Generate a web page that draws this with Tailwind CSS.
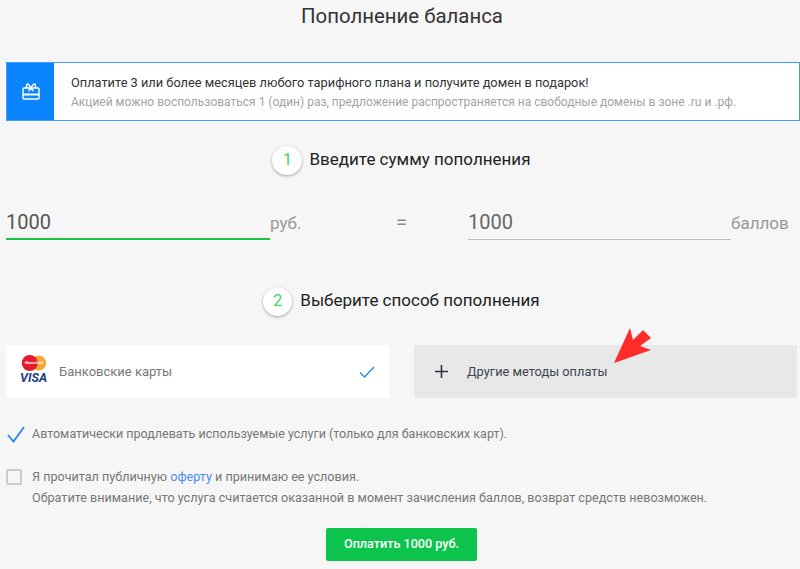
<!DOCTYPE html>
<html lang="ru">
<head>
<meta charset="utf-8">
<title>Пополнение баланса</title>
<script src="https://cdn.jsdelivr.net/npm/@tailwindcss/browser@4"></script>
</head>
<body class="bg-[#f6f6f6] font-['Roboto',sans-serif] overflow-hidden">
<main class="relative w-[800px] h-[569px] overflow-hidden">
    <!-- Title -->
    <h1 class="h-[32px] leading-[32px] text-center text-[20.4px] text-[#333] pl-[4px]">Пополнение баланса</h1>

    <!-- Promo banner -->
    <section class="flex h-[59px] mt-[30px] ml-[6px] bg-white border border-[#3d9dff]">
        <div class="flex items-center justify-center w-[47px] bg-[#0a84ff]">
            <svg width="18" height="17" viewBox="0 0 18 17" fill="none" stroke="#fff" stroke-width="1.4">
                <rect x="1" y="5" width="16" height="11" rx="1"/>
                <path d="M1 11.5h16" stroke-width="2"/>
                <path d="M9 5C7.5 2.5 6.5 1 5.5 1S4 3 5 5M9 5c1.5-2.5 2.5-4 3.5-4S14 3 13 5M9 5 6.5 8M9 5l2.5 3"/>
            </svg>
        </div>
        <div class="pl-[17px] pt-[11px]">
            <p class="text-[12.8px] leading-[18px] text-[#333]">Оплатите 3 или более месяцев любого тарифного плана и получите домен в подарок!</p>
            <p class="text-[12px] leading-[18px] mt-[1px] text-[#a3a3a3]">Акцией можно воспользоваться 1 (один) раз, предложение распространяется на свободные домены в зоне .ru и .рф.</p>
        </div>
    </section>

    <!-- Step 1 -->
    <div class="flex items-center justify-center h-[30px] mt-[24px] pl-[3px] gap-[7px]">
        <span class="flex items-center justify-center w-[30px] h-[29px] rounded-full bg-white shadow-[0_1px_3px_rgba(0,0,0,0.35)] text-[#3ed45f] text-[16px]">1</span>
        <span class="text-[17px] text-[#222]">Введите сумму пополнения</span>
    </div>

    <!-- Amount -->
    <div class="flex mt-[30px] ml-[6px] h-[35px]">
        <div class="w-[264px] h-[35px] border-b-2 border-[#19c63f] text-[20px] leading-[34px] text-[#555]">1000</div>
        <span class="w-[30px] text-[17px] leading-[36px] text-[#999]">руб.</span>
        <span class="ml-[96px] w-[72px] text-[20px] leading-[34px] text-[#888]">=</span>
        <div class="w-[263px] h-[35px] border-b border-[#bbb] text-[20px] leading-[34px] text-[#666]">1000</div>
        <span class="text-[17px] leading-[36px] text-[#999]">баллов</span>
    </div>

    <!-- Step 2 -->
    <div class="flex items-center justify-center h-[30px] mt-[46px] pl-[3px] gap-[8px]">
        <span class="flex items-center justify-center w-[29px] h-[29px] rounded-full bg-white shadow-[0_1px_3px_rgba(0,0,0,0.35)] text-[#3ed45f] text-[16px]">2</span>
        <span class="text-[17px] text-[#222]">Выберите способ пополнения</span>
    </div>

    <!-- Payment methods -->
    <div class="flex gap-[25px] mt-[29px] ml-[6px]">
        <div class="flex items-center w-[383px] h-[53px] bg-white pl-[14px] pr-[14px]">
            <div class="flex flex-col items-center w-[27px] h-[30px] -mt-[3px]">
                <svg width="26" height="17" viewBox="0 0 26 17">
                    <circle cx="18" cy="8.5" r="8" fill="#f4a83a"/>
                    <circle cx="8.5" cy="8.5" r="8.5" fill="#e21b2d"/>
                    <text x="13" y="9.5" text-anchor="middle" font-size="3.6" font-weight="700" fill="#fff">MasterCard</text>
                </svg>
                <span class="text-[12.5px] leading-[14px] font-bold italic text-[#1d3f7c]">VISA</span>
            </div>
            <span class="ml-[12px] text-[13px] text-[#777]">Банковские карты</span>
            <svg class="ml-auto" width="16" height="12" viewBox="0 0 16 12" fill="none" stroke="#1e88f0" stroke-width="1.3">
                <path d="M1 6.5 5.5 11 15 1"/>
            </svg>
        </div>
        <div class="flex items-center w-[383px] h-[53px] bg-[#e8e8e8] pl-[21px]">
            <svg width="13" height="13" viewBox="0 0 13 13" stroke="#2c3340" stroke-width="1.6">
                <path d="M6.5 0v13M0 6.5h13"/>
            </svg>
            <span class="ml-[19px] text-[12.8px] text-[#3d4550]">Другие методы оплаты</span>
        </div>
    </div>

    <!-- Options -->
    <div class="flex items-center mt-[26px] ml-[7px] h-[20px]">
        <svg width="18" height="17" viewBox="0 0 18 17" fill="none" stroke="#1e88f0" stroke-width="1.8">
            <path d="M1 9 6.5 15.5 17 1"/>
        </svg>
        <span class="ml-[7px] text-[12.5px] text-[#777]">Автоматически продлевать используемые услуги (только для банковских карт).</span>
    </div>
    <div class="flex mt-[22px] ml-[6px]">
        <span class="w-[16px] h-[16px] mt-[3px] border-2 border-[#ccc] rounded-[2px]"></span>
        <div class="ml-[10px] text-[12.6px] text-[#777] leading-[21px]">
            <p>Я прочитал публичную <a class="text-[#4a8cf0]">оферту</a> и принимаю ее условия.</p>
            <p>Обратите внимание, что услуга считается оказанной в момент зачисления баллов, возврат средств невозможен.</p>
        </div>
    </div>

    <!-- Pay button -->
    <div class="flex justify-center mt-[20px] pl-[3px]">
        <button class="w-[151px] h-[33px] rounded-[2px] bg-[#0cc44c] text-white text-[12.6px] font-medium">Оплатить 1000 руб.</button>
    </div>

    <!-- Red arrow annotation -->
    <svg class="absolute left-[612px] top-[327px]" width="40" height="37" viewBox="0 0 40 37">
        <path d="M2 36 18 1 21 13 31 3 39 11 28 19 39 23Z" fill="#ff2a2a"/>
    </svg>
</main>
</body>
</html>
